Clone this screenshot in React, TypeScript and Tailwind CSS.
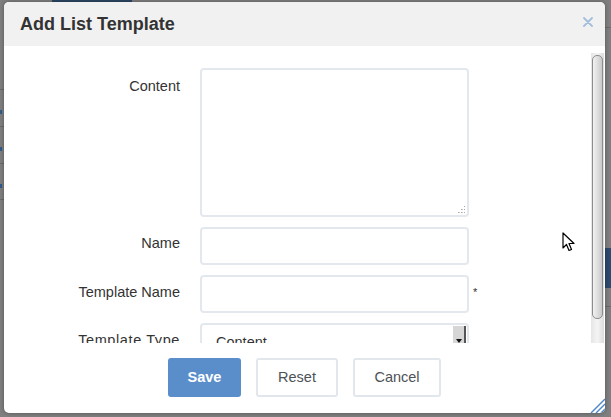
import React from "react";

export default function App() {
  return (
    <div
      className="relative w-[611px] h-[417px] overflow-hidden bg-[#7f7f7f]"
      style={{ fontFamily: '"Liberation Sans", Arial, sans-serif' }}
    >
      {/* backdrop details (underlying page through overlay) */}
      <div className="absolute left-[52px] top-0 h-[2px] w-[80px] bg-[#2b4764]" />
      <div className="absolute left-0 top-[89px] h-px w-[4px] bg-[#6a6a6a]" />
      <div className="absolute left-0 top-[126px] h-px w-[4px] bg-[#6a6a6a]" />
      <div className="absolute left-0 top-[163px] h-px w-[4px] bg-[#6a6a6a]" />
      <div className="absolute left-0 top-[199px] h-px w-[4px] bg-[#6a6a6a]" />
      <div className="absolute left-0 top-[110px] h-[4px] w-[2px] bg-[#2f5b8c]" />
      <div className="absolute left-0 top-[147px] h-[4px] w-[2px] bg-[#2f5b8c]" />
      <div className="absolute left-0 top-[184px] h-[4px] w-[2px] bg-[#2f5b8c]" />
      <div className="absolute right-0 top-[248px] h-[40px] w-[6px] bg-[#2c4b6d]" />
      <div className="absolute right-0 top-[306px] h-px w-[6px] bg-[#6a6a6a]" />
      <div className="absolute right-0 top-[27px] h-px w-[6px] bg-[#6a6a6a]" />

      {/* dialog */}
      <div className="absolute left-[4px] top-[2px] flex h-[411px] w-[601px] flex-col overflow-hidden rounded-[5px] bg-white shadow-[0_0_4px_rgba(0,0,0,0.35)]">
        {/* header */}
        <div className="flex h-[44px] shrink-0 items-center justify-between bg-[#f1f1f1] pl-[16px] pr-[12px]">
          <span className="text-[18px] font-bold text-[#333333]">Add List Template</span>
          <svg width="10" height="10" viewBox="0 0 10 10" className="mt-[-4px]">
            <path d="M1 1 L9 9 M9 1 L1 9" stroke="#a3bedc" strokeWidth="1.8" strokeLinecap="round" />
          </svg>
        </div>

        {/* body */}
        <div className="flex h-[297px] shrink-0 pt-[7px]">
          <div className="flex-1 overflow-hidden">
            <div className="flex flex-col gap-[10px] pt-[15px] text-[14.5px] text-[#333333]">
              {/* Content */}
              <div className="flex">
                <div className="w-[176px] pt-[8px] text-right leading-[20px]">Content</div>
                <div className="relative ml-[20px] h-[149px] w-[269px] rounded-[4px] border-2 border-[#e3e8ee]">
                  <svg width="9" height="9" viewBox="0 0 9 9" className="absolute bottom-[1px] right-[1px]">
                    <g fill="#a9a9a9">
                      <rect x="7" y="1" width="1" height="1" />
                      <rect x="7" y="4" width="1" height="1" />
                      <rect x="4" y="4" width="1" height="1" />
                      <rect x="7" y="7" width="1" height="1" />
                      <rect x="4" y="7" width="1" height="1" />
                      <rect x="1" y="7" width="1" height="1" />
                      <rect x="5" y="4" width="1" height="1" fill="#cfcfcf" />
                      <rect x="2" y="7" width="1" height="1" fill="#cfcfcf" />
                      <rect x="5" y="7" width="1" height="1" fill="#cfcfcf" />
                    </g>
                  </svg>
                </div>
              </div>
              {/* Name */}
              <div className="flex">
                <div className="w-[176px] pt-[6px] text-right leading-[20px]">Name</div>
                <div className="ml-[20px] h-[38px] w-[269px] rounded-[4px] border-2 border-[#e3e8ee]" />
              </div>
              {/* Template Name */}
              <div className="flex">
                <div className="w-[176px] pt-[7px] text-right leading-[20px]">Template Name</div>
                <div className="ml-[20px] h-[38px] w-[269px] rounded-[4px] border-2 border-[#e3e8ee]" />
                <div className="ml-[4px] pt-[11px] text-[11px] leading-[12px] text-[#333]">*</div>
              </div>
              {/* Template Type */}
              <div className="flex">
                <div className="w-[176px] pt-[7px] text-right leading-[20px] tracking-[0.6px]">Template Type</div>
                <div className="relative ml-[20px] h-[60px] w-[269px] rounded-[4px] border-2 border-[#e3e8ee]">
                  <div className="pl-[14px] pt-[7px] leading-[20px] text-[#333]">Content</div>
                  <div className="absolute right-[1px] top-[1px] flex h-[40px] w-[13px] flex-col items-center border-r-2 border-[#555] bg-[#d6d6d6]">
                    <svg width="6" height="4" viewBox="0 0 6 4" className="mt-[13px]">
                      <path d="M0 0 L6 0 L3 4 Z" fill="#111" />
                    </svg>
                  </div>
                </div>
              </div>
            </div>
          </div>
          {/* scrollbar */}
          <div className="mr-[1px] flex w-[13px] justify-center bg-gradient-to-r from-[#e6e6e6] via-[#f4f4f4] to-[#dcdcdc]">
            <div className="mt-[2px] h-[264px] w-[11px] rounded-[5px] border border-[#8c8c8c] bg-gradient-to-r from-[#f2f2f2] via-[#dedede] to-[#c9c9c9]" />
          </div>
        </div>

        {/* footer */}
        <div className="relative flex flex-1 justify-center gap-[15px] pt-[15px]">
          <button className="h-[39px] w-[73px] rounded-[3px] bg-[#5a8ecb] text-[14.5px] font-bold text-white">
            Save
          </button>
          <button className="h-[39px] w-[82px] rounded-[3px] border-2 border-[#e2e7ed] bg-white text-[14.5px] text-[#4d5257]">
            Reset
          </button>
          <button className="h-[39px] w-[88px] rounded-[3px] border-2 border-[#e2e7ed] bg-white text-[14.5px] text-[#4d5257]">
            Cancel
          </button>
          <svg width="16" height="15" viewBox="0 0 16 15" className="absolute bottom-0 right-0">
            <g stroke="#4f88c8" strokeWidth="1.4">
              <path d="M2 15 L16 1" />
              <path d="M7 15 L16 6" />
              <path d="M12 15 L16 11" />
            </g>
          </svg>
        </div>
      </div>

      {/* mouse cursor */}
      <svg width="14" height="21" viewBox="0 0 14 21" className="absolute left-[562px] top-[232px]">
        <path
          d="M1 1 L1 16 L4.5 12.5 L7 18.5 L9.5 17.5 L7 11.5 L12 11.5 Z"
          fill="white"
          stroke="black"
          strokeWidth="1.2"
          strokeLinejoin="round"
        />
      </svg>
    </div>
  );
}
